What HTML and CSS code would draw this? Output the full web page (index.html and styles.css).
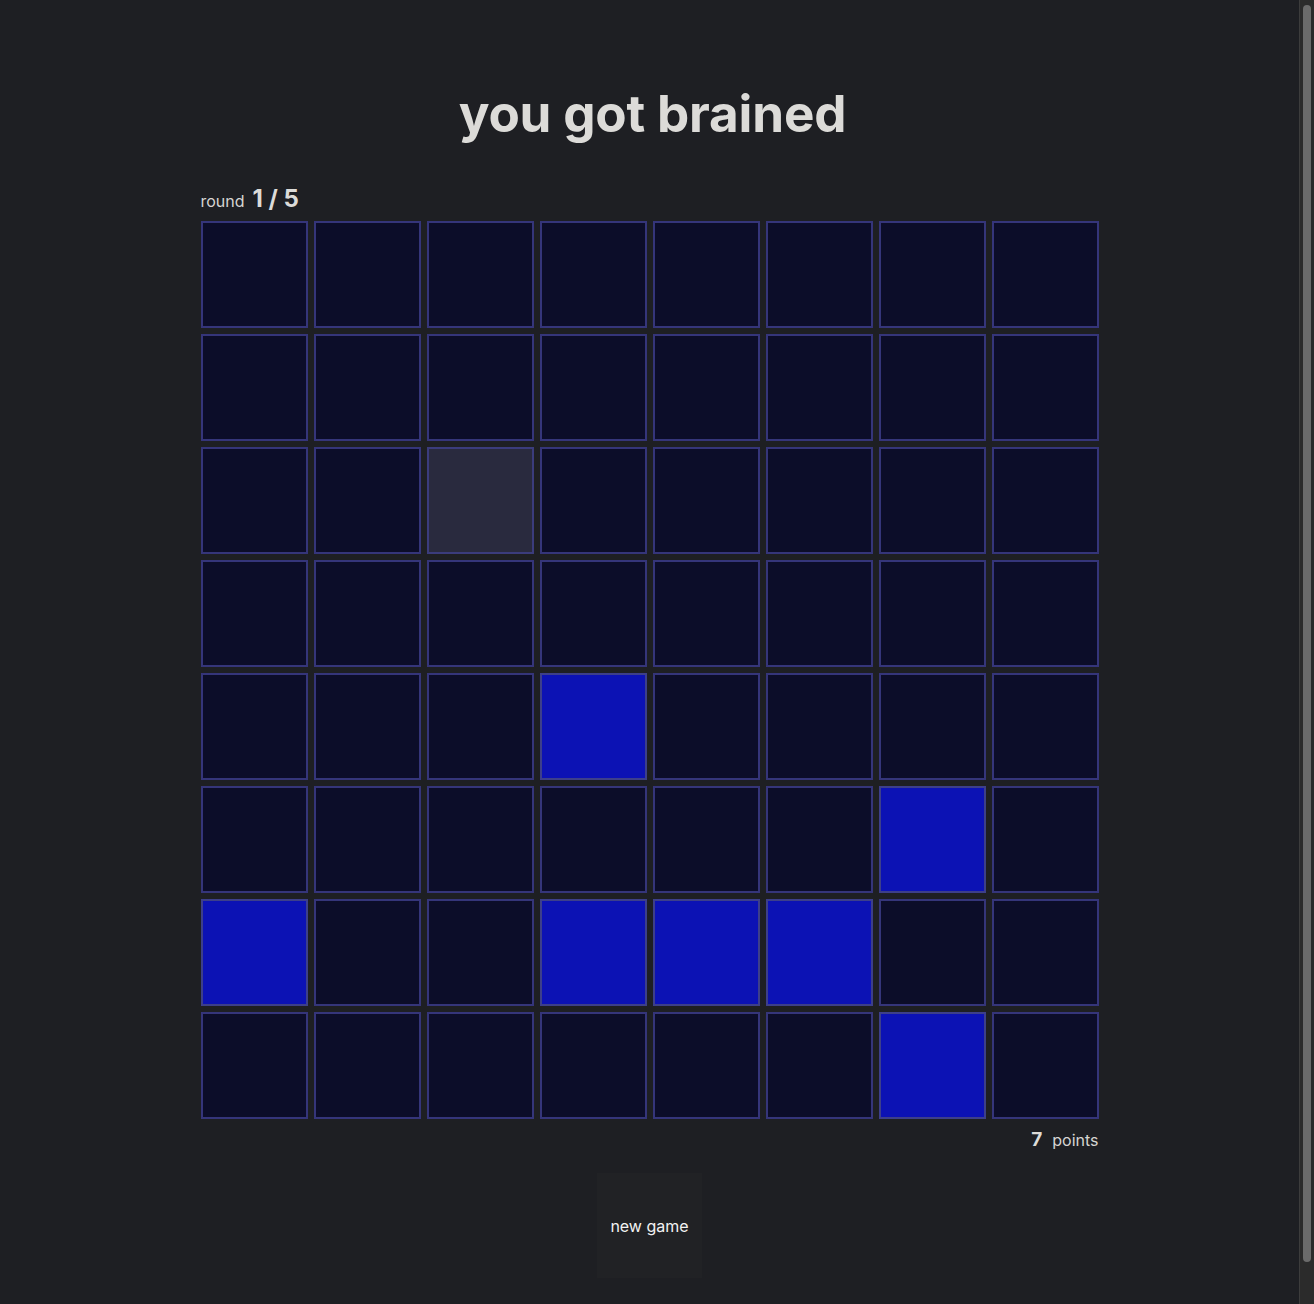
FILE: index.html
```html
<!DOCTYPE html>
<html lang="en">
<head>
<meta charset="utf-8">
<title>you got brained</title>
<link rel="stylesheet" href="styles.css">
</head>
<body>
<main class="app">
  <h1 class="title">you got brained</h1>
  <div class="board">
    <div class="round"><span class="round-label">round</span><span class="round-value">1 / 5</span></div>
    <div class="grid">
      <div class="cell"></div><div class="cell"></div><div class="cell"></div><div class="cell"></div><div class="cell"></div><div class="cell"></div><div class="cell"></div><div class="cell"></div>
      <div class="cell"></div><div class="cell"></div><div class="cell"></div><div class="cell"></div><div class="cell"></div><div class="cell"></div><div class="cell"></div><div class="cell"></div>
      <div class="cell"></div><div class="cell"></div><div class="cell hover"></div><div class="cell"></div><div class="cell"></div><div class="cell"></div><div class="cell"></div><div class="cell"></div>
      <div class="cell"></div><div class="cell"></div><div class="cell"></div><div class="cell"></div><div class="cell"></div><div class="cell"></div><div class="cell"></div><div class="cell"></div>
      <div class="cell"></div><div class="cell"></div><div class="cell"></div><div class="cell on"></div><div class="cell"></div><div class="cell"></div><div class="cell"></div><div class="cell"></div>
      <div class="cell"></div><div class="cell"></div><div class="cell"></div><div class="cell"></div><div class="cell"></div><div class="cell"></div><div class="cell on"></div><div class="cell"></div>
      <div class="cell on"></div><div class="cell"></div><div class="cell"></div><div class="cell on"></div><div class="cell on"></div><div class="cell on"></div><div class="cell"></div><div class="cell"></div>
      <div class="cell"></div><div class="cell"></div><div class="cell"></div><div class="cell"></div><div class="cell"></div><div class="cell"></div><div class="cell on"></div><div class="cell"></div>
    </div>
    <div class="score"><span class="score-value">7</span><span class="score-label">points</span></div>
  </div>
  <button class="new-game" type="button">new game</button>
</main>
<div class="scrollbar" aria-hidden="true"><div class="scrollbar-thumb"></div></div>
</body>
</html>
```
FILE: styles.css
```css
html {
  background: #1e1f23;
}
body {
  margin: 0;
  padding-right: 15px;
  background: #1e1f23;
  color: #dcdbd8;
  font-family: Inter, "Noto Sans", sans-serif;
}
.app {
  display: flex;
  flex-direction: column;
  align-items: center;
  padding: 81px 0 74px;
}
.title {
  margin: 0 0 39px;
  padding-left: 6px;
  font-size: 51.2px;
  line-height: 64px;
  font-weight: 700;
  color: #dcdbd8;
  letter-spacing: -0.2px;
}
.board {
  width: 898px;
  display: flex;
  flex-direction: column;
}
.round {
  display: flex;
  align-items: baseline;
  gap: 8px;
  height: 37px;
}
.round-label {
  font-size: 16px;
  color: #d6d5d2;
}
.round-value {
  font-size: 24px;
  font-weight: 700;
  color: #dcdbd8;
}
.grid {
  display: grid;
  grid-template-columns: repeat(8, 107px);
  grid-auto-rows: 107px;
  gap: 6px;
}
.cell {
  box-sizing: border-box;
  border: 2px solid #35357a;
  background: #0c0d29;
}
.cell.on {
  background: #0c12b4;
  border-color: #3d3f8a;
}
.cell.hover {
  background: #292a3e;
  border-color: #3b3c7c;
}
.score {
  display: flex;
  justify-content: flex-end;
  align-items: baseline;
  gap: 10px;
  margin-top: 9px;
}
.score-value {
  font-size: 19px;
  font-weight: 700;
}
.score-label {
  font-size: 16px;
  color: #d6d5d2;
}
.new-game {
  margin-top: 22px;
  width: 105px;
  height: 105px;
  border: none;
  background: #212225;
  color: #f2f2f2;
  font-family: Inter, "Noto Sans", sans-serif;
  font-size: 16px;
  padding: 0;
}
.scrollbar {
  position: fixed;
  top: 0;
  right: 0;
  bottom: 0;
  width: 15px;
  box-sizing: border-box;
  background: #2b2b2b;
  border-left: 1px solid #3c3c3c;
}
.scrollbar-thumb {
  position: absolute;
  top: 5px;
  left: 3px;
  width: 8px;
  height: 1257px;
  border-radius: 4px;
  background: #6b6b6b;
}
```
